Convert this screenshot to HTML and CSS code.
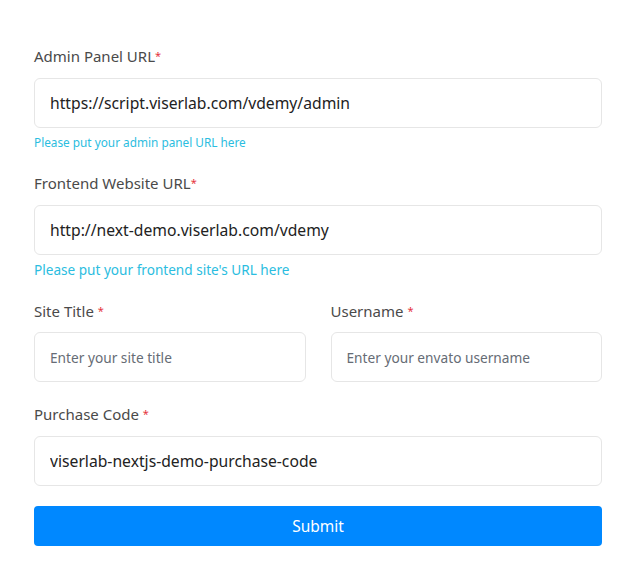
FILE: index.html
```html
<!DOCTYPE html>
<html>
<head>
<meta charset="utf-8">
<link rel="stylesheet" href="styles.css">
</head>
<body>
<form class="form">
  <div class="field field-help">
    <label class="label">Admin Panel URL<span class="req">*</span></label>
    <input class="input" type="text" value="https://script.viserlab.com/vdemy/admin">
    <div class="help help-sm">Please put your admin panel URL here</div>
  </div>
  <div class="field field-help2">
    <label class="label">Frontend Website URL<span class="req">*</span></label>
    <input class="input" type="text" value="http://next-demo.viserlab.com/vdemy">
    <div class="help help-md">Please put your frontend site's URL here</div>
  </div>
  <div class="row">
    <div class="field">
      <label class="label label-tight">Site Title <span class="req">*</span></label>
      <input class="input input-ph" type="text" placeholder="Enter your site title">
    </div>
    <div class="field">
      <label class="label label-tight">Username <span class="req">*</span></label>
      <input class="input input-ph" type="text" placeholder="Enter your envato username">
    </div>
  </div>
  <div class="field field-last">
    <label class="label">Purchase Code <span class="req">*</span></label>
    <input class="input" type="text" value="viserlab-nextjs-demo-purchase-code">
  </div>
  <button class="submit" type="button">Submit</button>
</form>
</body>
</html>
```
FILE: styles.css
```css
* { box-sizing: border-box; }
html, body { margin: 0; background: #fff; }
body {
  font-family: "Noto Sans", "Open Sans", sans-serif;
  padding: 46px 37px 0 34px;
}
.form { display: flex; flex-direction: column; }
.field { display: flex; flex-direction: column; margin-bottom: 22px; }
.field-help { margin-bottom: 23px; }
.field-help2 { margin-bottom: 22px; }
.field-last { margin-bottom: 20px; }
.label {
  font-size: 15px;
  color: #4a4a4a;
  line-height: 20px;
  margin-bottom: 12px;
}
.label-tight { margin-bottom: 11px; }
.req { color: #e5343d; font-size: 11px; vertical-align: top; }
.input {
  height: 50px;
  border: 1px solid #e6e6e6;
  border-radius: 6px;
  padding: 0 15px;
  font-family: inherit;
  font-size: 15.7px;
  color: #222;
  outline: none;
}
.input-ph { font-size: 13.7px; }
.input-ph::placeholder { color: #666c75; }
.help { color: #2bbde0; margin-top: 6px; }
.help-sm { font-size: 11.8px; line-height: 16px; }
.help-md { font-size: 13.6px; line-height: 18px; }
.row { display: grid; grid-template-columns: 1fr 1fr; gap: 25px; }
.submit {
  height: 40px;
  border: none;
  border-radius: 4px;
  background: #0088ff;
  color: #fff;
  font-family: inherit;
  font-size: 15.5px;
}
```
